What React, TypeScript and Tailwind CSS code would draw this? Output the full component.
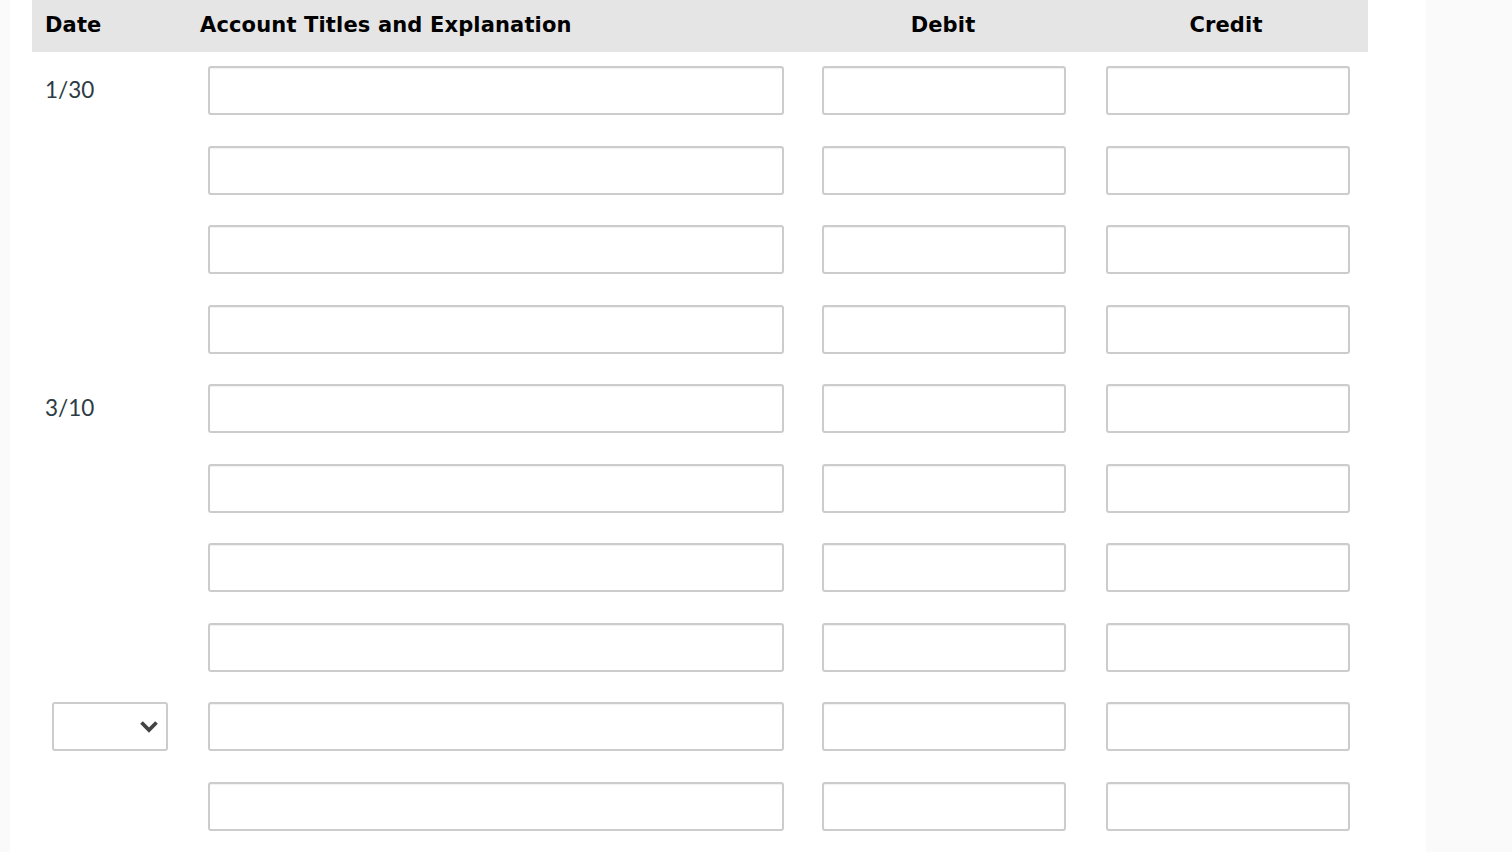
import React from "react";

const Input = ({ className = "" }: { className?: string }) => (
  <div
    className={`h-[49px] border-2 border-[#cccccc] rounded-[3px] bg-white shadow-[inset_0_1px_1px_rgba(0,0,0,0.06)] ${className}`}
  />
);

type Row = { date?: string; select?: boolean };

const rows: Row[] = [
  { date: "1/30" },
  {},
  {},
  {},
  { date: "3/10" },
  {},
  {},
  {},
  { select: true },
  {},
];

export default function App() {
  return (
    <div className="min-h-[852px] w-[1512px] bg-[#fafafa] flex overflow-hidden">
      <div className="ml-[10px] w-[1416px] bg-white min-h-[852px]">
        <div className="ml-[22px] w-[1336px]">
          <div
            className="flex h-[52px] items-center bg-[#e5e5e5] text-black font-bold text-[21px] tracking-[0.15px]"
            style={{ fontFamily: "'DejaVu Sans', Verdana, sans-serif" }}
          >
            <div className="w-[164px] pl-[13px]">Date</div>
            <div className="w-[606px] pl-[4px]">Account Titles and Explanation</div>
            <div className="w-[284px] text-center pr-[2px]">Debit</div>
            <div className="w-[282px] text-center pr-[2px]">Credit</div>
          </div>
          <div className="flex flex-col gap-[30.5px] pt-[14px]">
            {rows.map((r, i) => (
              <div key={i} className="flex items-center h-[49px]">
                <div
                  className="w-[164px] pl-[13px] text-[22.5px] text-[#2d3b45]"
                  style={{ fontFamily: "'Lato', 'Open Sans', sans-serif" }}
                >
                  {r.select ? (
                    <div className="ml-[7px] w-[116px] h-[49px] border-2 border-[#cccccc] rounded-[3px] bg-white flex items-center justify-end pr-[7px]">
                      <svg width="20" height="13" viewBox="0 0 20 13">
                        <polyline
                          points="2.5,2.5 10,10 17.5,2.5"
                          fill="none"
                          stroke="#444444"
                          strokeWidth="3.8"
                        />
                      </svg>
                    </div>
                  ) : (
                    <span className="relative -top-[1px]">{r.date ?? ""}</span>
                  )}
                </div>
                <div className="w-[606px] pl-[12px]">
                  <Input className="w-[576px]" />
                </div>
                <div className="w-[284px] pl-[20px]">
                  <Input className="w-[244px]" />
                </div>
                <div className="w-[282px] pl-[20px]">
                  <Input className="w-[244px]" />
                </div>
              </div>
            ))}
          </div>
        </div>
      </div>
    </div>
  );
}
